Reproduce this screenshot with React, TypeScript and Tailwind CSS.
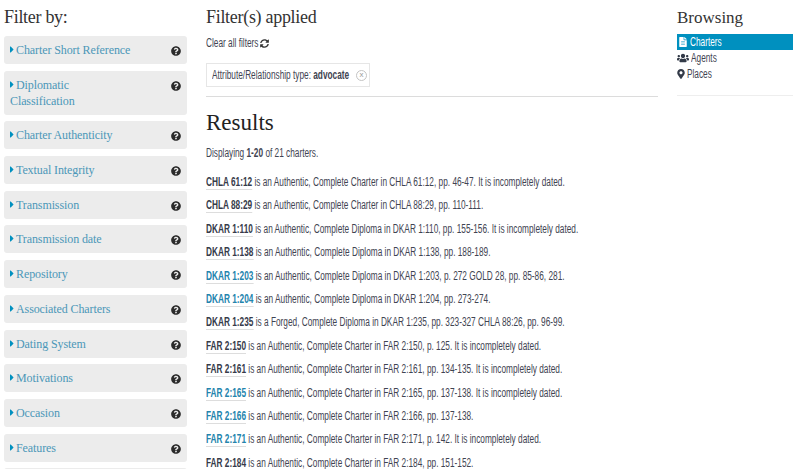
import { FaCaretRight, FaFileAlt, FaMapMarkerAlt, FaQuestionCircle, FaSyncAlt, FaUsers } from "react-icons/fa";

const bodyFont = "font-['Liberation_Sans',sans-serif]";
const headingFont = "font-['Liberation_Serif',serif]";
// no narrow face is installed, so the body text is squeezed sideways
const narrow = "origin-left scale-x-[0.69] whitespace-nowrap";

const filters = [
	"Charter Short Reference",
	"Diplomatic Classification",
	"Charter Authenticity",
	"Textual Integrity",
	"Transmission",
	"Transmission date",
	"Repository",
	"Associated Charters",
	"Dating System",
	"Motivations",
	"Occasion",
	"Features",
];

const results = [
	{ ref: "CHLA 61:12", rest: " is an Authentic, Complete Charter in CHLA 61:12, pp. 46-47. It is incompletely dated." },
	{ ref: "CHLA 88:29", rest: " is an Authentic, Complete Charter in CHLA 88:29, pp. 110-111." },
	{ ref: "DKAR 1:110", rest: " is an Authentic, Complete Diploma in DKAR 1:110, pp. 155-156. It is incompletely dated." },
	{ ref: "DKAR 1:138", rest: " is an Authentic, Complete Diploma in DKAR 1:138, pp. 188-189." },
	{ ref: "DKAR 1:203", rest: " is an Authentic, Complete Diploma in DKAR 1:203, p. 272 GOLD 28, pp. 85-86, 281.", link: true },
	{ ref: "DKAR 1:204", rest: " is an Authentic, Complete Diploma in DKAR 1:204, pp. 273-274.", link: true },
	{ ref: "DKAR 1:235", rest: " is a Forged, Complete Diploma in DKAR 1:235, pp. 323-327 CHLA 88:26, pp. 96-99." },
	{ ref: "FAR 2:150", rest: " is an Authentic, Complete Charter in FAR 2:150, p. 125. It is incompletely dated." },
	{ ref: "FAR 2:161", rest: " is an Authentic, Complete Charter in FAR 2:161, pp. 134-135. It is incompletely dated." },
	{ ref: "FAR 2:165", rest: " is an Authentic, Complete Charter in FAR 2:165, pp. 137-138. It is incompletely dated.", link: true },
	{ ref: "FAR 2:166", rest: " is an Authentic, Complete Charter in FAR 2:166, pp. 137-138.", link: true },
	{ ref: "FAR 2:171", rest: " is an Authentic, Complete Charter in FAR 2:171, p. 142. It is incompletely dated.", link: true },
	{ ref: "FAR 2:184", rest: " is an Authentic, Complete Charter in FAR 2:184, pp. 151-152." },
];

function FilterBox({ label }: { label: string }) {
	return (
		<div className="mb-[6.7px] flex min-h-[28px] items-start justify-between rounded-[3px] bg-[#ececec] p-[6px]">
			<p className={`${headingFont} w-[122px] text-[12px] leading-[16px] tracking-[-0.1px] text-[#4b97b8]`}>
				<FaCaretRight className="mr-[2px] inline-block h-[11px] w-[4px] align-[-1px] text-[#0090bf]" />
				{label}
			</p>
			<FaQuestionCircle className="mt-[4px] shrink-0 text-[#2b2b2b]" size={10} />
		</div>
	);
}

export default function App() {
	return (
		<div className={`${bodyFont} flex h-[469px] w-[800px] gap-[19px] overflow-hidden bg-white pr-[7px] pl-[4px] text-[12px] text-[#3f4452]`}>
			<aside className="w-[183px] shrink-0 pt-[8px]">
				<h2 className={`${headingFont} mb-[9px] text-[18px] leading-[19px] tracking-[-0.3px] text-[#333]`}>Filter by:</h2>
				{filters.map((filter) => (
					<FilterBox key={filter} label={filter} />
				))}
				<div className="h-[28px] rounded-[3px] bg-[#ececec]" />
			</aside>

			<main className="w-[452px] shrink-0 pt-[8px]">
				<h2 className={`${headingFont} text-[18px] leading-[19px] tracking-[-0.3px] text-[#333]`}>Filter(s) applied</h2>
				<div className="mt-[8px] flex items-center gap-[2px] leading-[16px]">
					<span className={`${narrow} w-[52px]`}>Clear all filters</span>
					<FaSyncAlt className="text-[#333]" size={9} />
				</div>
				<div className="mt-[12px] flex h-[24px] w-[164px] items-center gap-[6px] border border-[#e6e6e6] px-[5px]">
					<span className={`${narrow} w-[138px]`}>
						Attribute/Relationship type: <b className="font-bold">advocate</b>
					</span>
					<span className="flex h-[11px] w-[11px] shrink-0 items-center justify-center rounded-full border border-[#c4c4c4] text-[8px] leading-none text-[#999]">
						x
					</span>
				</div>
				<div className="mt-[9px] border-b border-[#dcdcdc]" />
				<h1 className={`${headingFont} mt-[13px] text-[23px] leading-[25px] text-[#222]`}>Results</h1>
				<p className={`${narrow} mt-[10px] mb-[13px] leading-[16px]`}>
					Displaying <b className="font-bold">1-20</b> of 21 charters.
				</p>
				{results.map((row) => (
					<p key={row.ref} className={`${narrow} mb-[7.4px] leading-[16px]`}>
						<b className={`border-b border-[#ddd] font-bold ${row.link ? "text-[#2384ad]" : "text-[#363b4a]"}`}>{row.ref}</b>
						{row.rest}
					</p>
				))}
			</main>

			<aside className="w-[116px] shrink-0 pt-[8px]">
				<h2 className={`${headingFont} mb-[7px] text-[17px] leading-[19px] text-[#333]`}>Browsing</h2>
				<ul className="border-b border-[#eee] pb-[13px] leading-[16px]">
					<li className="flex items-center gap-[2px] bg-[#0090bf] text-white">
						<FaFileAlt size={10} className="ml-[1px]" />
						<span className={narrow}>Charters</span>
					</li>
					<li className="flex items-center gap-[2px]">
						<FaUsers size={12} className="text-[#333a48]" />
						<span className={narrow}>Agents</span>
					</li>
					<li className="flex items-center gap-[1px]">
						<FaMapMarkerAlt size={10} className="ml-[-1px] text-[#333a48]" />
						<span className={narrow}>Places</span>
					</li>
				</ul>
			</aside>
		</div>
	);
}
